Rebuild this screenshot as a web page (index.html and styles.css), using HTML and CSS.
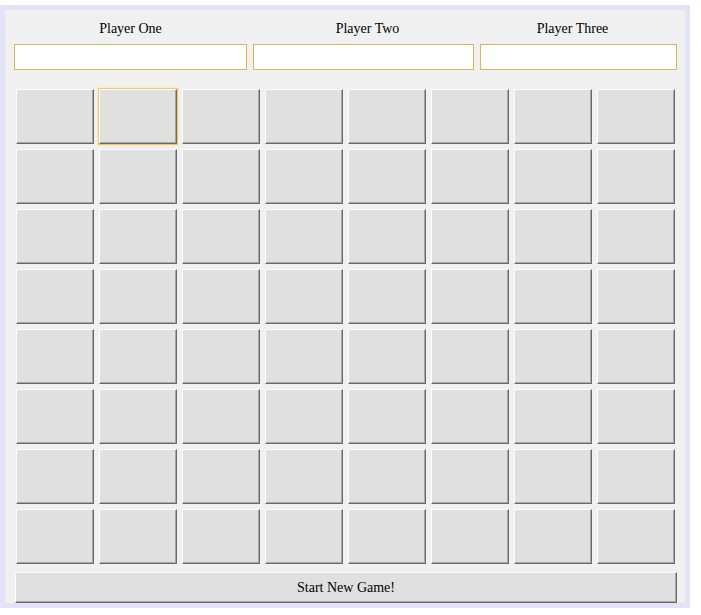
FILE: index.html
```html
<!DOCTYPE html>
<html>
<head>
<meta charset="utf-8">
<link rel="stylesheet" href="styles.css">
</head>
<body>
<div class="frame">
  <div class="players">
    <div class="player">
      <div class="label">Player One</div>
      <input class="name" type="text">
    </div>
    <div class="player">
      <div class="label label-two">Player Two</div>
      <input class="name" type="text">
    </div>
    <div class="player">
      <div class="label label-three">Player Three</div>
      <input class="name" type="text">
    </div>
  </div>
  <div class="board">
    <button class="cell"></button><button class="cell focused"></button><button class="cell"></button><button class="cell"></button><button class="cell"></button><button class="cell"></button><button class="cell"></button><button class="cell"></button>
    <button class="cell"></button><button class="cell"></button><button class="cell"></button><button class="cell"></button><button class="cell"></button><button class="cell"></button><button class="cell"></button><button class="cell"></button>
    <button class="cell"></button><button class="cell"></button><button class="cell"></button><button class="cell"></button><button class="cell"></button><button class="cell"></button><button class="cell"></button><button class="cell"></button>
    <button class="cell"></button><button class="cell"></button><button class="cell"></button><button class="cell"></button><button class="cell"></button><button class="cell"></button><button class="cell"></button><button class="cell"></button>
    <button class="cell"></button><button class="cell"></button><button class="cell"></button><button class="cell"></button><button class="cell"></button><button class="cell"></button><button class="cell"></button><button class="cell"></button>
    <button class="cell"></button><button class="cell"></button><button class="cell"></button><button class="cell"></button><button class="cell"></button><button class="cell"></button><button class="cell"></button><button class="cell"></button>
    <button class="cell"></button><button class="cell"></button><button class="cell"></button><button class="cell"></button><button class="cell"></button><button class="cell"></button><button class="cell"></button><button class="cell"></button>
    <button class="cell"></button><button class="cell"></button><button class="cell"></button><button class="cell"></button><button class="cell"></button><button class="cell"></button><button class="cell"></button><button class="cell"></button>
  </div>
  <button class="start">Start New Game!</button>
</div>
</body>
</html>
```
FILE: styles.css
```css
html, body {
  margin: 0;
  padding: 0;
  background: #ffffff;
}
body {
  font-family: "Liberation Serif", "Times New Roman", serif;
  font-size: 14px;
  color: #000;
}
.frame {
  margin-top: 5px;
  width: 680px;
  height: 583px;
  border: 5px solid #e2e2f8;
  background: #f0f0f0;
  padding: 10px 0 0 0;
  box-sizing: content-box;
}
.players {
  display: grid;
  grid-template-columns: 233px 221px 197px;
  column-gap: 6px;
  padding-left: 9px;
}
.player {
  display: flex;
  flex-direction: column;
  align-items: stretch;
}
.label {
  text-align: center;
  line-height: 16px;
  height: 16px;
  margin-top: 1px;
  margin-bottom: 7px;
}
.label-two {
  padding-left: 8px;
}
.label-three {
  padding-right: 12px;
}
.name {
  display: block;
  box-sizing: border-box;
  width: 100%;
  height: 26px;
  margin: 0;
  padding: 0 3px;
  border: 1px solid #dcb45a;
  background: #ffffff;
  outline: none;
}
.board {
  display: grid;
  grid-template-columns: repeat(8, 78px);
  grid-auto-rows: 55px;
  gap: 5px;
  margin: 19px 0 0 11px;
}
.cell, .start {
  display: block;
  box-sizing: border-box;
  margin: 0;
  padding: 0;
  background: #e0e0e0;
  border-style: solid;
  border-width: 1px;
  border-color: #fcfcfc #6a6a6a #6a6a6a #fcfcfc;
  box-shadow: inset -1px -1px 0 #a6a6a6;
  font-family: "Liberation Serif", "Times New Roman", serif;
  font-size: 14px;
  color: #000;
}
.focused {
  outline: 1px solid #f0c868;
  outline-offset: 0;
  box-shadow: inset -1px -1px 0 #a6a6a6, 0 0 0 2px #fbe9c0;
}
.start {
  width: 662px;
  height: 31px;
  margin: 8px 0 0 10px;
  line-height: 28px;
}
```
